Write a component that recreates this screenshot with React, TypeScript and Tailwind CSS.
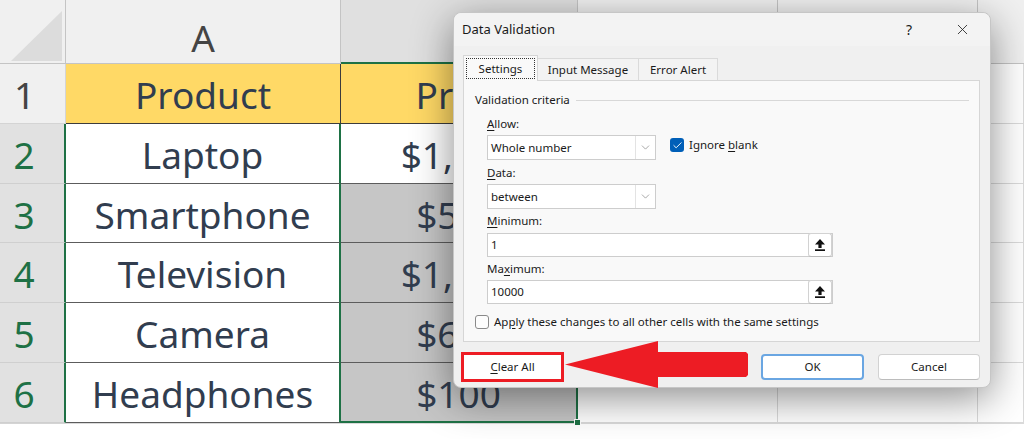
import { ChevronDown, X, Check } from 'lucide-react';

const items = [
  { n: '2', name: 'Laptop', price: '$1,200' },
  { n: '3', name: 'Smartphone', price: '$500' },
  { n: '4', name: 'Television', price: '$1,500' },
  { n: '5', name: 'Camera', price: '$600' },
  { n: '6', name: 'Headphones', price: '$100' },
];

const cellText = "flex items-center justify-center pt-[3px] text-[37px] text-[#313d4f]";
const blank = "border-r border-b border-[#dadada] bg-white";

function UploadIcon() {
  return (
    <svg width="10" height="12" viewBox="0 0 10 12">
      <polygon points="5,0 10,5.5 6.6,5.5 6.6,9 3.4,9 3.4,5.5 0,5.5" fill="#111" />
      <rect x="0" y="10.3" width="10" height="1.7" fill="#111" />
    </svg>
  );
}

function Dropdown({ value }: { value: string }) {
  return (
    <div className="flex h-[25px] w-[169px] items-center border border-[#cdcdcd] bg-white">
      <span className="flex-1 pl-[3px]">{value}</span>
      <span className="flex h-full w-[20px] items-center justify-center border-l border-[#e3e3e3]">
        <ChevronDown size={13} strokeWidth={1.2} className="text-[#7a7a7a]" />
      </span>
    </div>
  );
}

function RangeInput({ value }: { value: string }) {
  return (
    <div className="flex h-[24px] w-[346px] items-center border border-[#cdcdcd] bg-white pl-[3px]">
      <span className="flex-1">{value}</span>
      <span className="flex h-[24px] w-[24px] items-center justify-center rounded-[3px] border border-[#d2d2d2] border-b-[#b8b8b8] bg-white">
        <UploadIcon />
      </span>
    </div>
  );
}

function Label({ pre = '', u, post }: { pre?: string; u: string; post: string }) {
  return (
    <div className="h-4 leading-4">
      {pre}
      <span className="underline underline-offset-2">{u}</span>
      {post}
    </div>
  );
}

export default function App() {
  return (
    <div className="relative h-[439px] w-[1024px] overflow-hidden bg-white font-['Noto_Sans',sans-serif]">
      {/* sheet */}
      <div className="grid w-[1024px] grid-cols-[66px_275px_237px_200px_200px_46px] grid-rows-[64px_60px_60px_59px_60px_60px_60px]">
        {/* column headers */}
        <div className="flex items-end justify-end border-r border-b border-[#c4c4c4] bg-[#f0f0f0] pr-[3px] pb-[2px]">
          <svg width="51" height="50" viewBox="0 0 51 50">
            <polygon points="0,50 51,0 51,50" fill="#dcdcdc" />
          </svg>
        </div>
        <div className="flex items-center justify-center border-r border-b border-[#c4c4c4] bg-[#f0f0f0] pt-[12px] text-[37px] text-[#444]">A</div>
        <div className="flex items-center justify-center border-r border-b-2 border-[#c4c4c4] border-b-[#1e7145] bg-[#e0e0e0] pl-[40px] pt-[12px] text-[37px] text-[#444]">B</div>
        {['C', 'D'].map(c => (
          <div key={c} className="flex items-center justify-center border-r border-b border-[#c4c4c4] bg-[#f0f0f0] pt-[12px] text-[37px] text-[#444]">{c}</div>
        ))}
        <div className="border-b border-[#c4c4c4] bg-[#f0f0f0]" />

        {/* row 1 */}
        <div className="flex items-center justify-center border-r border-b border-[#d4d4d4] bg-[#f0f0f0] pr-4 pt-[3px] text-[37px] text-[#444]">1</div>
        <div className={`${cellText} border-r border-b border-[#3c3c3c] bg-[#ffd966]`}>Product</div>
        <div className={`${cellText} border-r-2 border-b border-r-[#1e7145] border-b-[#3c3c3c] bg-[#ffd966]`}>Price</div>
        <div className={blank} />
        <div className={blank} />
        <div className={blank} />

        {/* rows 2-6 */}
        {items.map((it, i) => (
          <div key={it.n} className="contents">
            <div className="flex items-center justify-center border-r-2 border-b border-r-[#1e7145] border-b-[#cfcfcf] bg-[#e1e1e1] pr-4 pt-[3px] text-[37px] text-[#1e7145]">
              {it.n}
            </div>
            <div className={`${cellText} border-r-2 border-b border-r-[#1e7145] border-b-[#5c5c5c] bg-white`}>{it.name}</div>
            <div
              className={`${cellText} border-r-2 border-r-[#1e7145] ${i === 4 ? 'border-b-2 border-b-[#1e7145]' : 'border-b border-b-[#5c5c5c]'} ${i === 0 ? 'bg-white' : 'bg-[#c6c6c6]'}`}
            >
              {it.price}
            </div>
            <div className={blank} />
            <div className={blank} />
            <div className={blank} />
          </div>
        ))}

        {/* row 7 */}
        <div className="border-r border-b border-[#d4d4d4] bg-[#f0f0f0]" />
        <div className={blank} />
        <div className={blank} />
        <div className={blank} />
        <div className={blank} />
        <div className={blank} />
      </div>

      {/* fill handle */}
      <div className="absolute left-[574px] top-[419px] h-[7px] w-[7px] border border-white bg-[#1e7145]" />

      {/* Data Validation dialog */}
      <div className="absolute left-[453px] top-[12px] flex h-[376px] w-[538px] flex-col rounded-lg border border-[#c6c6c6] bg-[#f0f0f0] text-[11.5px] text-[#1a1a1a] shadow-[0_10px_40px_rgba(0,0,0,0.45)]">
        <div className="flex h-[33px] items-center rounded-t-lg bg-[#f3f3f3] pl-2 text-[13px]">
          <span>Data Validation</span>
          <span className="ml-auto w-[20px] text-center text-[14px]">?</span>
          <span className="ml-[23px] mr-[8px] flex w-[40px] justify-center">
            <X size={17} strokeWidth={1.2} className="text-[#222]" />
          </span>
        </div>

        <div className="flex flex-1 flex-col pl-[9px] pr-[10px] pt-[9px]">
          {/* tabs */}
          <div className="flex h-[25px] items-end">
            <div className="relative z-10 -mb-px flex h-[26px] w-[75px] border border-b-0 border-[#d6d6d6] bg-[#f9f9f9] p-[2px]">
              <div className="flex flex-1 items-center justify-center border border-dotted border-[#333]">Settings</div>
            </div>
            <div className="flex h-[22px] w-[101px] items-center justify-center border border-l-0 border-b-0 border-[#dadada] bg-[#f3f3f3]">Input Message</div>
            <div className="flex h-[22px] w-[79px] items-center justify-center border border-l-0 border-b-0 border-[#dadada] bg-[#f3f3f3]">Error Alert</div>
          </div>

          {/* panel */}
          <div className="flex h-[262px] flex-col border border-[#d6d6d6] bg-[#f9f9f9] pt-[11px]">
            <div className="flex h-4 items-center pl-[11px] pr-[10px]">
              <span className="leading-4">Validation criteria</span>
              <span className="ml-[6px] h-px flex-1 bg-[#d8d8d8]" />
            </div>

            <div className="flex flex-col pl-[23px]">
              <div className="mt-2">
                <Label u="A" post="llow:" />
              </div>
              <div className="mt-[3px] flex items-start">
                <Dropdown value="Whole number" />
                <span className="ml-[14px] mt-[3px] flex h-[14px] w-[14px] items-center justify-center rounded-[3px] bg-[#005fb8]">
                  <Check size={11} strokeWidth={2} className="text-white" />
                </span>
                <span className="ml-[5px] mt-[2px] leading-4">
                  Ignore <span className="underline underline-offset-2">b</span>lank
                </span>
              </div>
              <div className="mt-[5px]">
                <Label u="D" post="ata:" />
              </div>
              <div className="mt-[3px]">
                <Dropdown value="between" />
              </div>
              <div className="mt-1">
                <Label u="M" post="inimum:" />
              </div>
              <div className="mt-1">
                <RangeInput value="1" />
              </div>
              <div className="mt-1">
                <Label pre="Ma" u="x" post="imum:" />
              </div>
              <div className="mt-[3px]">
                <RangeInput value="10000" />
              </div>
            </div>

            <div className="mt-[10px] flex h-4 items-center pl-[11px]">
              <span className="h-[14px] w-[14px] rounded-[3px] border border-[#8a8a8a] bg-[#fdfdfd]" />
              <span className="ml-[5px] leading-4">
                Ap<span className="underline underline-offset-2">p</span>ly these changes to all other cells with the same settings
              </span>
            </div>
          </div>

          {/* buttons */}
          <div className="mt-[10px] flex h-[30px] items-center">
            <div className="-ml-[2px] flex h-[30px] w-[103px] items-center justify-center border-[3px] border-[#ed1c24] bg-white">
              <span className="underline underline-offset-2">C</span>lear All
            </div>
            <div className="ml-auto flex h-[26px] w-[103px] items-center justify-center rounded-[4px] border-2 border-[#6aa6e2] bg-white">OK</div>
            <div className="ml-[14px] flex h-[26px] w-[102px] items-center justify-center rounded-[4px] border border-[#d2d2d2] border-b-[#bcbcbc] bg-white">Cancel</div>
          </div>
        </div>
      </div>

      {/* red arrow */}
      <svg className="absolute left-[560px] top-[338px]" width="195" height="54" viewBox="0 0 195 54">
        <polygon points="5,26.5 98,3 98,14 186,14 188,16 188,37 186,39 98,39 98,50" fill="#ed1c24" />
      </svg>
    </div>
  );
}
